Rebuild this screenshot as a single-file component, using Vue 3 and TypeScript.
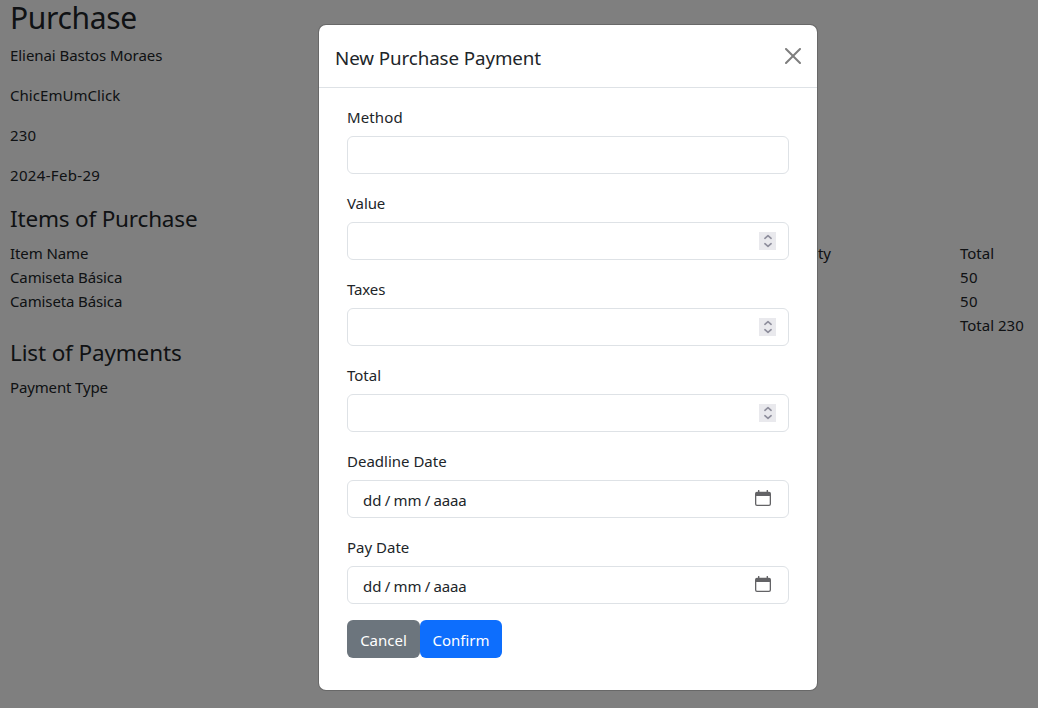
<script setup lang="ts">
interface Field {
  id: string
  label: string
  kind: 'text' | 'number' | 'date'
}

const details: { text: string; cls: string }[] = [
  { text: 'Elienai Bastos Moraes', cls: 'd-name' },
  { text: 'ChicEmUmClick', cls: 'd-store' },
  { text: '230', cls: 'd-total' },
  { text: '2024-Feb-29', cls: 'd-date' },
]

const items = [
  { name: 'Camiseta Básica', total: '50' },
  { name: 'Camiseta Básica', total: '50' },
]

const fields: Field[] = [
  { id: 'method', label: 'Method', kind: 'text' },
  { id: 'value', label: 'Value', kind: 'number' },
  { id: 'taxes', label: 'Taxes', kind: 'number' },
  { id: 'total', label: 'Total', kind: 'number' },
  { id: 'deadline', label: 'Deadline Date', kind: 'date' },
  { id: 'pay', label: 'Pay Date', kind: 'date' },
]
</script>

<template>
  <div class="screen">
    <main class="page">
      <h2 class="title">Purchase</h2>
      <p v-for="d in details" :key="d.text" :class="d.cls">{{ d.text }}</p>
      <h4 class="h-items">Items of Purchase</h4>
      <div class="row"><span class="c-item">Item Name</span><span>Quantity</span><span>Total</span></div>
      <div v-for="(item, i) in items" :key="i" class="row">
        <span class="c-name">{{ item.name }}</span><span></span><span class="c-num">{{ item.total }}</span>
      </div>
      <div class="row"><span></span><span></span><span>Total 230</span></div>
      <h4 class="h-list">List of Payments</h4>
      <div class="row"><span class="c-type">Payment Type</span></div>
    </main>

    <div class="backdrop">
      <section class="modal" role="dialog">
        <header class="modal-head">
          <h5>New Purchase Payment</h5>
          <button class="close" aria-label="Close">
            <svg width="16" height="16" viewBox="0 0 16 16">
              <path fill="#000" d="M.293.293a1 1 0 0 1 1.414 0L8 6.586 14.293.293a1 1 0 1 1 1.414 1.414L9.414 8l6.293 6.293a1 1 0 0 1-1.414 1.414L8 9.414l-6.293 6.293a1 1 0 0 1-1.414-1.414L6.586 8 .293 1.707a1 1 0 0 1 0-1.414z" />
            </svg>
          </button>
        </header>
        <form class="modal-body" @submit.prevent>
          <div v-for="f in fields" :key="f.id" class="field">
            <label :for="f.id" :class="'l-' + f.id">{{ f.label }}</label>
            <div class="control">
              <input v-if="f.kind !== 'date'" :id="f.id" type="text" />
              <div v-else :id="f.id" class="date">
                <span>dd</span><span class="slash">/</span><span>mm</span><span class="slash">/</span><span class="year">aaaa</span>
              </div>
              <span v-if="f.kind === 'number'" class="spin">
                <svg width="17" height="18" viewBox="0 0 17 18" fill="none" stroke="#8f8f9d" stroke-width="1.7" stroke-linecap="round" stroke-linejoin="round">
                  <path d="M5.900 6.300 9 3.700l3.100 2.600M5.900 11.700l3.100 2.600 3.100-2.600" />
                </svg>
              </span>
              <svg v-if="f.kind === 'date'" class="calendar" width="16" height="16" viewBox="0 0 16 16">
                <path fill="#636366" fill-rule="evenodd" d="M3 .6a.6.6 0 0 1 1.400 0V1.700h7.200V.6a.6.6 0 0 1 1.400 0V1.700h1a2 2 0 0 1 2 2V14a2 2 0 0 1-2 2H2a2 2 0 0 1-2-2V3.700a2 2 0 0 1 2-2h1zM1.300 6v8a.7.7 0 0 0 .7.700h12a.7.7 0 0 0 .7-.7V6z" />
              </svg>
            </div>
          </div>
          <div class="actions">
            <button class="btn cancel">Cancel</button>
            <button class="btn confirm">Confirm</button>
          </div>
        </form>
      </section>
    </div>
  </div>
</template>

<style>
body { margin: 0; overflow: hidden; }
</style>

<style scoped>
* { box-sizing: border-box; }
.screen {
  position: relative;
  width: 1038px;
  height: 708px;
  overflow: hidden;
  background: #fff;
  color: #212529;
  font: 400 15px/24px "Noto Sans", "Open Sans", sans-serif;
}
.page { display: flow-root; padding-left: 10px; white-space: nowrap; }
h2, h4, h5, p { margin: 0; font-weight: 400; }
.title { margin: 0 0 7px; font-size: 30px; line-height: 36px; letter-spacing: -0.35px; }
p { margin-bottom: 16px; }
.d-name { letter-spacing: -0.06px; }
.d-store { letter-spacing: 0.05px; }
.d-total { letter-spacing: 0.2px; }
.d-date { letter-spacing: 0.33px; }
h4 { height: 29px; margin-bottom: 8px; font-size: 22.5px; line-height: 29px; }
.h-items { margin-top: 17px; letter-spacing: -0.18px; }
.h-list { margin-top: 1px; letter-spacing: -0.14px; }
.c-item { letter-spacing: -0.1px; }
.c-name { letter-spacing: -0.12px; }
.c-num { letter-spacing: 0.3px; }
.c-type { letter-spacing: -0.14px; }
.row { display: grid; grid-template-columns: 760px 190px 78px; height: 24px; }
.backdrop {
  position: absolute;
  inset: 0;
  display: flex;
  align-items: flex-start;
  padding: 24px 0 0 318px;
  background: rgba(0, 0, 0, 0.5);
}
.modal {
  width: 500px;
  height: 667px;
  background: #fff;
  background-clip: padding-box;
  border: 1px solid rgba(0, 0, 0, 0.175);
  border-radius: 8px;
}
.modal-head {
  display: flex;
  align-items: center;
  justify-content: space-between;
  height: 63px;
  padding: 0 16px;
  border-bottom: 1px solid #dee2e6;
}
h5 { font-size: 18.75px; line-height: 30px; margin-top: 3px; white-space: nowrap; letter-spacing: -0.09px; }
.close { display: flex; padding: 0; border: 0; background: none; opacity: 0.5; }
.modal-body { padding: 16px 28px; }
.field { margin-bottom: 16px; }
label { display: block; height: 25px; padding-top: 1px; margin-bottom: 7px; width: max-content; }
.l-method { letter-spacing: 0.12px; }
.l-value, .l-taxes { letter-spacing: -0.12px; }
.control {
  display: flex;
  align-items: center;
  height: 38px;
  padding: 0 12px;
  border: 1px solid #dee2e6;
  border-radius: 6px;
}
input { flex: 1; min-width: 0; height: 36px; padding: 0; border: 0; outline: 0; background: none; font: inherit; }
.spin { display: flex; background: #e9e9ed; }
.date { display: flex; flex: 1; padding: 1px 0 0 3px; }
.slash { width: 12px; text-align: center; }
.year { letter-spacing: -0.15px; }
.calendar { margin: -2px 5px 0 0; }
.actions { display: flex; }
.btn {
  height: 38px;
  padding: 2px 0 0;
  border: 0;
  border-radius: 6px;
  color: #fff;
  font: inherit;
  text-align: center;
}
.cancel { width: 73px; background: #6c757d; }
.confirm { width: 82px; background: #0d6efd; }
</style>
